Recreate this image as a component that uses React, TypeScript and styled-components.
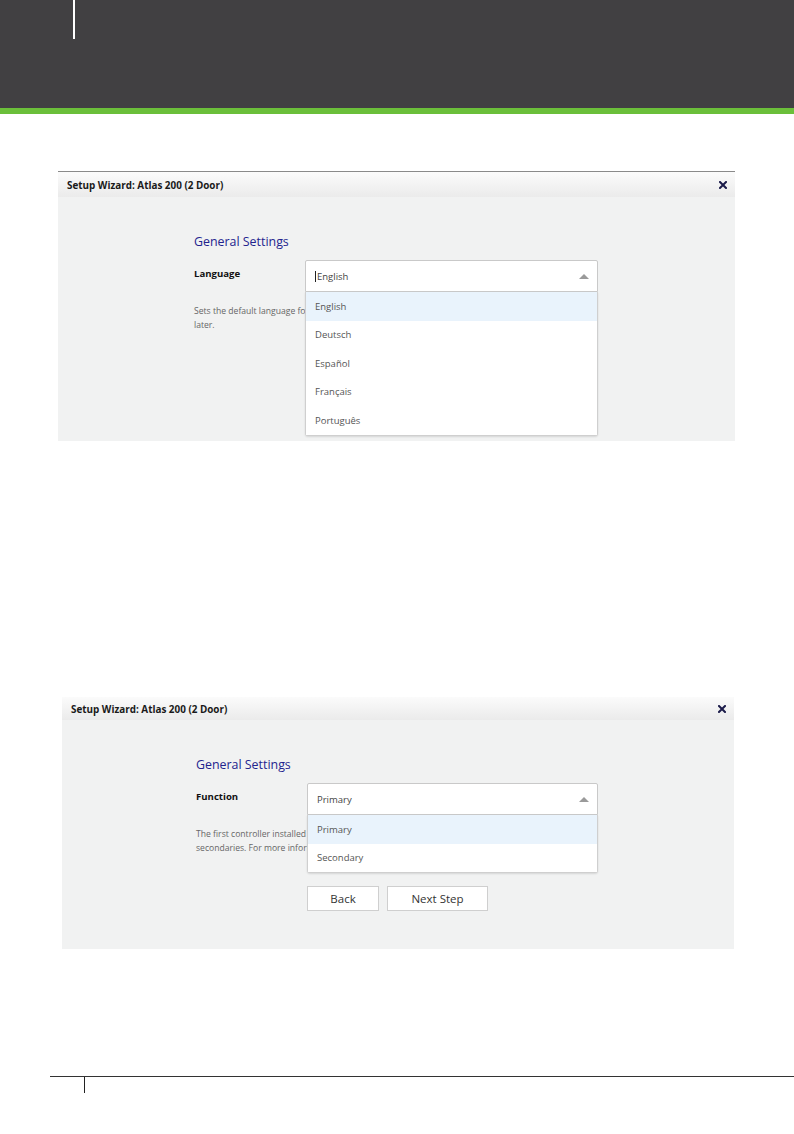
import { createGlobalStyle, styled } from 'styled-components'

const GlobalStyle = createGlobalStyle`
  html, body {
    margin: 0;
    padding: 0;
    background: #ffffff;
  }
  body {
    font-family: 'Open Sans', 'Noto Sans', sans-serif;
  }
`

const Page = styled.div`
  width: 794px;
  height: 1134px;
  display: flex;
  flex-direction: column;
  overflow: hidden;
`

const Header = styled.header`
  height: 108px;
  background: #414042;
  border-bottom: 6px solid #6bbf3a;
  padding-left: 73px;
`

const HeaderTick = styled.div`
  width: 2px;
  height: 39px;
  background: #ffffff;
`

const Panel = styled.section<{ $top: number; $left: number; $width: number; $border?: boolean }>`
  margin-top: ${(p) => p.$top}px;
  margin-left: ${(p) => p.$left}px;
  width: ${(p) => p.$width}px;
  border-top: ${(p) => (p.$border ? '1px solid #8a8a8a' : 'none')};
  display: flex;
  flex-direction: column;
`

const TitleBar = styled.div<{ $height: number }>`
  height: ${(p) => p.$height}px;
  background: linear-gradient(#fbfbfb, #ebebeb);
  display: flex;
  align-items: center;
  justify-content: space-between;
  padding: 0 8px 0 9px;
  font-size: 9.9px;
  font-weight: 700;
  color: #1a1a1a;
`

const Body = styled.div<{ $height: number; $indent: number }>`
  height: ${(p) => p.$height}px;
  background: #f1f2f2;
  padding: 36px 0 0 ${(p) => p.$indent}px;
  box-sizing: border-box;
`

const Heading = styled.h2`
  margin: 0 0 10px;
  font-size: 12.4px;
  font-weight: 400;
  color: #23238e;
`

const Row = styled.div`
  display: flex;
  align-items: flex-start;
`

const Label = styled.div`
  width: 111px;
  padding-top: 7px;
  font-size: 9.6px;
  font-weight: 700;
  color: #111;
`

const SelectWrap = styled.div<{ $width: number }>`
  position: relative;
  width: ${(p) => p.$width}px;
`

const SelectBox = styled.div`
  height: 32px;
  box-sizing: border-box;
  background: #fff;
  border: 1px solid #c9c9c9;
  border-radius: 2px 2px 0 0;
  display: flex;
  align-items: center;
  justify-content: space-between;
  padding: 0 8px 0 9px;
  font-size: 9.5px;
  color: #444;
`

const Caret = styled.span<{ $show: boolean }>`
  border-left: 1px solid #222;
  height: 11px;
  margin-right: 1px;
  vertical-align: -2px;
  display: ${(p) => (p.$show ? 'inline-block' : 'none')};
`

const Arrow = styled.span`
  width: 0;
  height: 0;
  border-left: 5px solid transparent;
  border-right: 5px solid transparent;
  border-bottom: 5px solid #9a9a9a;
`

const Menu = styled.ul`
  position: absolute;
  left: 0;
  right: 0;
  top: 32px;
  margin: 0;
  padding: 0;
  list-style: none;
  background: #fff;
  border: 1px solid #cfcfcf;
  border-top: none;
  border-radius: 0 0 3px 3px;
  box-shadow: 0 1px 2px rgba(0, 0, 0, 0.12);
  z-index: 2;
`

const MenuItem = styled.li<{ $active?: boolean }>`
  height: 28.5px;
  display: flex;
  align-items: center;
  padding-left: 9px;
  font-size: 9.5px;
  color: #555;
  background: ${(p) => (p.$active ? '#e9f3fc' : '#fff')};
`

const Help = styled.p`
  margin: 13px 0 0;
  font-size: 8.6px;
  line-height: 13.5px;
  color: #666;
  white-space: nowrap;
`

const Buttons = styled.div`
  display: flex;
  gap: 8px;
  margin: 31px 0 0 111px;
`

const Button = styled.button<{ $width: number }>`
  width: ${(p) => p.$width}px;
  height: 25px;
  background: #fff;
  border: 1px solid #cfcfcf;
  font-family: inherit;
  font-size: 11.5px;
  color: #333;
  padding: 0;
`

const Footer = styled.footer`
  margin-top: 127px;
  margin-left: 50px;
  border-top: 1px solid #333;
  padding-left: 34px;
`

const FooterTick = styled.div`
  width: 1px;
  height: 16px;
  background: #222;
`

function CloseIcon() {
  return (
    <svg width="8" height="8" viewBox="0 0 8 8">
      <path d="M1 1 L7 7 M7 1 L1 7" stroke="#1c1c4a" strokeWidth="2" strokeLinecap="square" />
    </svg>
  )
}

interface Wizard {
  label: string
  value: string
  options: string[]
  help: string[]
  buttons?: boolean
}

function Select({ value, options, caret, width }: { value: string; options: string[]; caret: boolean; width: number }) {
  return (
    <SelectWrap $width={width}>
      <SelectBox>
        <span>
          <Caret $show={caret} />
          {value}
        </span>
        <Arrow />
      </SelectBox>
      <Menu>
        {options.map((o) => (
          <MenuItem key={o} $active={o === value}>
            {o}
          </MenuItem>
        ))}
      </Menu>
    </SelectWrap>
  )
}

function WizardForm({ wizard, caret, width }: { wizard: Wizard; caret: boolean; width: number }) {
  return (
    <>
      <Heading>General Settings</Heading>
      <Row>
        <Label>{wizard.label}</Label>
        <Select value={wizard.value} options={wizard.options} caret={caret} width={width} />
      </Row>
      <Help>
        {wizard.help.map((line, i) => (
          <span key={i}>
            {i > 0 && <br />}
            {line}
          </span>
        ))}
      </Help>
      {wizard.buttons && (
        <Buttons>
          <Button $width={72}>Back</Button>
          <Button $width={101}>Next Step</Button>
        </Buttons>
      )}
    </>
  )
}

const LANGUAGE: Wizard = {
  label: 'Language',
  value: 'English',
  options: ['English', 'Deutsch', 'Español', 'Français', 'Português'],
  help: ['Sets the default language for the user interface. This can be changed', 'later.'],
}

const FUNCTION: Wizard = {
  label: 'Function',
  value: 'Primary',
  options: ['Primary', 'Secondary'],
  help: [
    'The first controller installed must be the primary, all others are',
    'secondaries. For more information see the guide.',
  ],
  buttons: true,
}

export default function App() {
  return (
    <Page>
      <GlobalStyle />
      <Header>
        <HeaderTick />
      </Header>

      <Panel $top={57} $left={58} $width={677} $border>
        <TitleBar $height={25}>
          Setup Wizard: Atlas 200 (2 Door)
          <CloseIcon />
        </TitleBar>
        <Body $height={244} $indent={136}>
          <WizardForm wizard={LANGUAGE} caret width={293} />
        </Body>
      </Panel>

      <Panel $top={256} $left={62} $width={672}>
        <TitleBar $height={23}>
          Setup Wizard: Atlas 200 (2 Door)
          <CloseIcon />
        </TitleBar>
        <Body $height={229} $indent={134}>
          <WizardForm wizard={FUNCTION} caret={false} width={291} />
        </Body>
      </Panel>

      <Footer>
        <FooterTick />
      </Footer>
    </Page>
  )
}
